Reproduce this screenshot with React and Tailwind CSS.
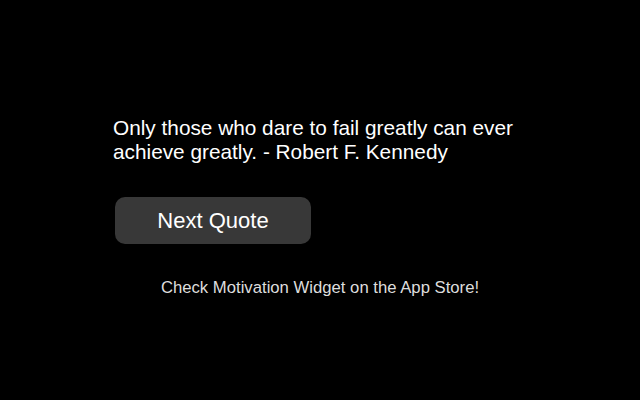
import { useState } from 'react'

const quotes = [
  'Only those who dare to fail greatly can ever achieve greatly. - Robert F. Kennedy',
  'The secret of getting ahead is getting started. - Mark Twain',
]

export default function App() {
  const [index, setIndex] = useState(0)

  return (
    <div className="min-h-[400px] w-[640px] bg-black text-white font-['Liberation_Sans',Arial,sans-serif] pt-[116px]">
      <div className="pl-[113px] pr-[100px]">
        <p className="text-[20.8px] leading-[23.5px]">{quotes[index]}</p>
        <button
          onClick={() => setIndex((index + 1) % quotes.length)}
          className="mt-[34px] ml-[2px] w-[196px] h-[47px] rounded-[10px] bg-[#383838] text-[22px] text-white"
        >
          Next Quote
        </button>
      </div>
      <p className="mt-[34px] text-center text-[16.7px] leading-[19px] text-[#dddddd]">
        Check Motivation Widget on the App Store!
      </p>
    </div>
  )
}
